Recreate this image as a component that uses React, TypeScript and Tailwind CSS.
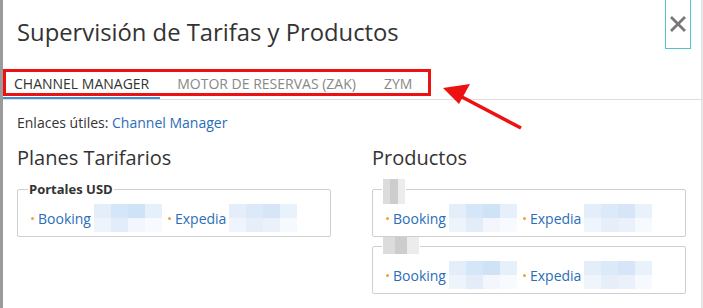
import React from 'react'

const font = { fontFamily: '"Open Sans", "Liberation Sans", sans-serif' }

function Blur({ w, h, cells }: { w: number; h: number; cells: string[] }) {
  return (
    <span
      className="inline-grid grid-cols-4 grid-rows-2 overflow-hidden align-middle"
      style={{ width: w, height: h }}
    >
      {cells.map((c, i) => (
        <span key={i} style={{ background: c }} />
      ))}
    </span>
  )
}

const blues1 = ['#e3eefa', '#d4e6f8', '#cfe3f7', '#e6f0fb', '#eef4fc', '#e2edf9', '#f3f7fd', '#f7fafe']
const blues2 = ['#e4eefa', '#dbe9f9', '#d6e6f8', '#e9f1fb', '#eef5fd', '#e6eefa', '#eaf1fb', '#f6f9fe']

function Item({ name, blur }: { name: string; blur: string[] }) {
  return (
    <span className="flex items-center">
      <span className="w-[3px] h-[3px] rounded-full bg-[#f0a33a] mr-[4px]" />
      <span className="text-[14px] text-[#2a6db8]">{name}</span>
      <span className="ml-[3px]">
        <Blur w={68} h={28} cells={blur} />
      </span>
    </span>
  )
}

function Group({ legend, legendW, legendH, legendTop }: { legend?: string; legendW?: number; legendH?: number; legendTop?: number }) {
  return (
    <fieldset className="border border-[#cfcfcf] rounded-[2px] h-[56px] pl-[13px] pr-[10px] min-w-0">
      {legend ? (
        <legend className="-ml-[3px] px-[1px] text-[13px] font-bold text-[#333] leading-[16px]">{legend}</legend>
      ) : (
        <legend className="-ml-[4px] px-[1px] h-[16px] leading-[0px]">
          <span className="relative flex" style={{ width: legendW, height: legendH, top: legendTop }}>
            <span className="flex-1 bg-[#dcdcdc]" />
            <span className="flex-1 bg-[#cdcdcd]" />
            <span className="flex-1 bg-[#ececec]" />
          </span>
        </legend>
      )}
      <div className="flex items-center gap-[6px] pt-[7px]">
        <Item name="Booking" blur={blues1} />
        <Item name="Expedia" blur={blues2} />
      </div>
    </fieldset>
  )
}

export default function App() {
  return (
    <div className="relative w-[703px] h-[308px] overflow-hidden bg-white flex" style={font}>
      <div className="w-[3px] bg-[#9b9b9b] shrink-0" />
      <div className="flex-1 flex flex-col">
        {/* header */}
        <div className="h-[70px] flex items-start justify-between pl-[14px] pr-[10px]">
          <h1 className="mt-[17px] text-[23.8px] leading-[30px] text-[#333]">
            Supervisión de Tarifas y Productos
          </h1>
          <button className="-mt-[1px] w-[26px] h-[50px] border border-[#54c3cb] flex items-center justify-center text-[#777]">
            <svg width="18" height="18" viewBox="0 0 18 18" stroke="#777" strokeWidth="2.8">
              <path d="M2 2 L16 16 M16 2 L2 16" />
            </svg>
          </button>
        </div>

        {/* tabs */}
        <div className="flex gap-[6px] border-b border-[#dedede] h-[30px]">
          <div className="px-[11px] h-full flex items-center text-[14px] text-[#333] border-b-2 border-[#3d8fd6] -mb-[1px] pb-[1px]">
            CHANNEL MANAGER
          </div>
          <div className="px-[11px] h-full flex items-center text-[14px] text-[#888] pb-[3px]">
            MOTOR DE RESERVAS (ZAK)
          </div>
          <div className="px-[11px] h-full flex items-center text-[14px] text-[#888] pb-[3px]">ZYM</div>
        </div>

        {/* body */}
        <div className="pl-[14px] pr-[14px] pt-[13px]">
          <p className="text-[14px] text-[#333] leading-[20px]">
            Enlaces útiles: <span className="text-[#2a6db8]">Channel Manager</span>
          </p>
          <div className="grid grid-cols-[314px_314px] gap-[41px] mt-[12px]">
            <div>
              <h2 className="text-[20px] leading-[26px] text-[#333]">Planes Tarifarios</h2>
              <div className="mt-[10px]">
                <Group legend="Portales USD" />
              </div>
            </div>
            <div>
              <h2 className="text-[20px] leading-[26px] text-[#333]">Productos</h2>
              <div className="mt-[10px] flex flex-col gap-[1px]">
                <Group legendW={22} legendH={25} legendTop={-2} />
                <Group legendW={36} legendH={17} legendTop={-1} />
              </div>
            </div>
          </div>
        </div>
      </div>
      <div className="w-[2px] bg-[#e4e4e4] shrink-0" />

      {/* annotation: red box */}
      <div className="absolute left-[3px] top-[69px] w-[428px] h-[27px] border-[3px] border-[#ee1111]" />
      {/* annotation: arrow */}
      <svg className="absolute left-0 top-0" width="703" height="308" viewBox="0 0 703 308">
        <line x1="521" y1="128" x2="462" y2="97" stroke="#ee1111" strokeWidth="3.5" />
        <polygon points="443,88 470,84 459,104" fill="#ee1111" />
      </svg>
    </div>
  )
}
